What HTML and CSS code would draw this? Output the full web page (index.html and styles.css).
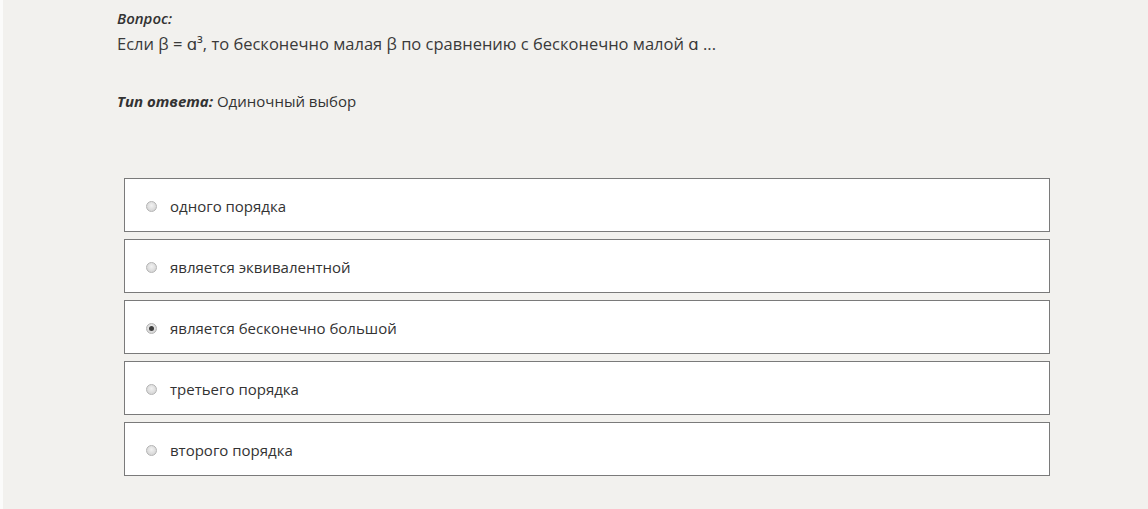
FILE: index.html
```html
<!DOCTYPE html>
<html lang="ru">
<head>
<meta charset="utf-8">
<link rel="stylesheet" href="styles.css">
</head>
<body>
<div class="page">
  <div class="question">
    <div class="label"><em>Вопрос:</em></div>
    <div class="text">Если β = ɑ³, то бесконечно малая β по сравнению с бесконечно малой ɑ ...</div>
    <div class="type"><strong><em>Тип ответа:</em></strong> Одиночный выбор</div>
  </div>
  <ul class="options">
    <li class="option"><span class="radio"></span><span class="opt-text">одного порядка</span></li>
    <li class="option"><span class="radio"></span><span class="opt-text">является эквивалентной</span></li>
    <li class="option"><span class="radio checked"></span><span class="opt-text">является бесконечно большой</span></li>
    <li class="option"><span class="radio"></span><span class="opt-text">третьего порядка</span></li>
    <li class="option"><span class="radio"></span><span class="opt-text">второго порядка</span></li>
  </ul>
</div>
</body>
</html>
```

FILE: styles.css
```css
html, body {
  margin: 0;
  padding: 0;
  background: #fbfbfa;
}
body {
  font-family: "Open Sans", "DejaVu Sans", sans-serif;
  font-size: 15px;
  color: #333;
}
.page {
  margin-left: 3px;
  background: #f2f1ee;
  height: 509px;
  padding-top: 6px;
  box-sizing: border-box;
  overflow: hidden;
}
.question {
  padding-left: 114px;
  line-height: 25px;
}
.label em {
  font-style: italic;
  font-weight: 600;
}
.text {
  font-size: 16.5px;
  color: #3a3a3a;
}
.type {
  margin-top: 33px;
}
.type strong {
  font-weight: 700;
}
.options {
  list-style: none;
  margin: 64px 0 0 121px;
  padding: 0;
  width: 926px;
  display: flex;
  flex-direction: column;
  gap: 7px;
}
.option {
  height: 54px;
  box-sizing: border-box;
  border: 1px solid #7a7a7a;
  background: #fff;
  display: flex;
  align-items: center;
  padding: 2px 0 0 21px;
}
.radio {
  width: 11px;
  height: 11px;
  border-radius: 50%;
  box-sizing: border-box;
  border: 1px solid #b4b4b4;
  background: radial-gradient(circle at 50% 40%, #f2f2f2 0%, #d8d8d8 70%, #cfcfcf 100%);
  position: relative;
  flex: none;
}
.radio.checked::after {
  content: "";
  position: absolute;
  left: 2px;
  top: 2px;
  width: 5px;
  height: 5px;
  border-radius: 50%;
  background: #3d3d3d;
}
.opt-text {
  margin-left: 13px;
  line-height: 20px;
}
```
